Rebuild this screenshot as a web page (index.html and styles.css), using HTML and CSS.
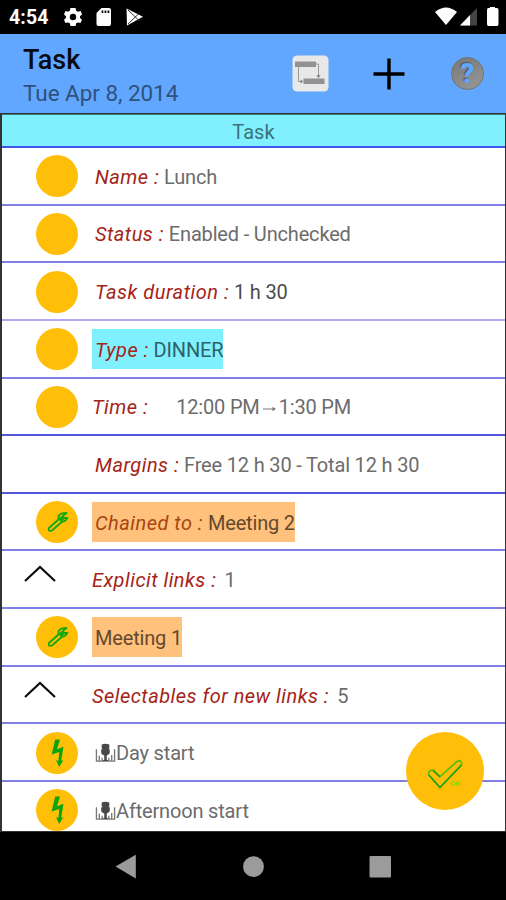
FILE: index.html
```html
<!DOCTYPE html>
<html lang="en">
<head>
<meta charset="utf-8">
<title>Task</title>
<link rel="stylesheet" href="styles.css">
</head>
<body>
<svg class="defs" aria-hidden="true">
  <symbol id="wrench" viewBox="0 0 42 42"><path d="M13 27 L22.5 18.5 Q21.5 14 26 12.3 L30.5 12 L27 14.8 L28 17 L31.5 16.8 Q29.5 20.5 26 20.8 L16 29.5 Q11.5 31 13 27Z" fill="none" stroke="#12a80c" stroke-width="1.8" stroke-linejoin="round"/><path d="M22.5 18 L26 14.5 L28 18.5 L25 21Z" fill="#12a80c"/></symbol>
  <symbol id="bolt" viewBox="0 0 42 42"><path d="M19.2 7.5 L24 7.5 L21 17.3 L27.5 14.8 L25.2 28.7 L27.4 28 L23.2 35 L20 28 L22.4 29 L23.2 20 L15.6 22.6Z" fill="#0ca50c"/></symbol>
  <symbol id="chevron" viewBox="0 0 32 18"><path d="M1 16 L16 2 L31 16" fill="none" stroke="#080808" stroke-width="2.1"/></symbol>
  <symbol id="mic" viewBox="0 0 22 20"><path d="M1.5 6 V18.5 H20.5 V6 M4.5 13 V18 M7.5 15 V18 M14.5 15 V18 M17.5 12 V18" fill="none" stroke="#777" stroke-width="1.4"/><path d="M7 1 Q11 -.5 15 1 V5 L14 6 H15.5 V10 Q14.5 12 12.3 12.5 V17 L14.5 18.5 H7.5 L9.7 17 V12.5 Q7 12 6.5 10 V6 H8 L7 5Z" fill="#484848"/></symbol>
</svg>
<div class="screen">
  <header class="status">
    <span class="clock">4:54</span>
    <svg class="tray" width="84" height="20" viewBox="0 0 84 20">
      <g fill="#fff">
        <path fill-rule="evenodd" d="M7.5 1 H12.5 L13.2 3.8 L15 4.8 L17.8 4 L19 7.5 L17 9.2 V11 L19 12.8 L17.5 16 L14.8 15.4 L13.2 16.3 L12.5 19 H7.5 L6.8 16.3 L5 15.4 L2.4 16 L1 12.8 L3 11 V9.2 L1 7.5 L2.4 4 L5 4.8 L6.8 3.8Z M10 6.8 A3.2 3.2 0 1 0 10 13.2 A3.2 3.2 0 1 0 10 6.8Z"/>
        <path fill-rule="evenodd" d="M38.5 1 H46 Q48 1 48 3 V17 Q48 19 46 19 H35.5 Q33.5 19 33.5 17 V6Z M38.6 3.5 V6 H40.3 V3.5Z M41.6 3.5 V6 H43.3 V3.5Z M44.6 3.5 V6 H46.3 V3.5Z"/>
        <path d="M63.5 1.5 L80 9.7 L64 18.5Z"/>
      </g>
      <path d="M65 3 L76.5 14 M65 17 L76.5 6" stroke="#333" stroke-width="1" fill="none"/>
    </svg>
    <svg class="radio" width="66" height="20" viewBox="0 0 66 20">
      <path d="M0 5 Q11 -4 22 5 L11 18Z" fill="#fff"/>
      <path d="M25 18.5 L42 1 V18.5Z" fill="#444"/><path d="M25 18.5 L35 8 V18.5Z" fill="#fff"/>
      <path d="M55 1 V0 H60 V1 H62 Q63.5 1 63.5 3 V17 Q63.5 19 62 19 H53.5 Q52 19 52 17 V3 Q52 1 53.5 1Z" fill="#fff"/>
    </svg>
  </header>
  <div class="appbar">
    <div class="titles"><h1>Task</h1><p>Tue Apr 8, 2014</p></div>
    <svg class="link-tool" width="37" height="37" viewBox="0 0 37 37">
      <rect x=".5" y=".5" width="36" height="36" rx="4.5" fill="#e8e8e8"/>
      <path d="M3 6.5 H24 V12 H3Z M11.5 23.5 H32.5 V29 H11.5Z" fill="#929292"/>
      <path d="M24 9 H26.5 V21 M6.5 12 V26.5 H9" fill="none" stroke="#999" stroke-width="1"/>
      <path d="M24.5 20 H28.5 L26.5 23.5Z M8.5 24.5 L11.5 26.5 L8.5 28.5Z" fill="#888"/>
    </svg>
    <svg class="add-tool" width="32" height="32" viewBox="0 0 32 32"><path d="M16 .5 V31.5 M.5 16 H31.5" stroke="#000" stroke-width="3.4"/></svg>
    <span class="help">?</span>
  </div>
  <main class="list">
    <div class="caption">Task</div>
    <div class="row"><i class="dot"></i><p class="cell name"><em>Name :</em> Lunch</p></div>
    <div class="row"><i class="dot"></i><p class="cell stat"><em>Status :</em> Enabled - Unchecked</p></div>
    <div class="row soft"><i class="dot"></i><p class="cell dark"><em>Task duration :</em> 1 h 30</p></div>
    <div class="row"><i class="dot"></i><p class="cell type"><em>Type :</em> DINNER</p></div>
    <div class="row strong"><i class="dot"></i><p class="cell flush time"><em>Time :</em><span>12:00 PM<svg width="19" height="8" viewBox="0 0 19 8"><path d="M3 4 H14" stroke="#777" fill="none"/><path d="M12.5 1.7 L16 4 L12.5 6.3Z" fill="#777"/></svg>1:30 PM</span></p></div>
    <div class="row strong"><i class="dot none"></i><p class="cell"><em>Margins :</em> Free 12 h 30 - Total 12 h 30</p></div>
    <div class="row"><i class="dot"><svg width="42" height="42"><use href="#wrench"/></svg></i><p class="cell chained"><em>Chained to :</em> Meeting 2</p></div>
    <div class="row group"><svg class="chev" width="32" height="18"><use href="#chevron"/></svg><p class="cell flush links"><em>Explicit links :</em><span>1</span></p></div>
    <div class="row"><i class="dot"><svg width="42" height="42"><use href="#wrench"/></svg></i><p class="cell chained meeting">Meeting 1</p></div>
    <div class="row group"><svg class="chev" width="32" height="18"><use href="#chevron"/></svg><p class="cell flush choices"><em>Selectables for new links :</em><span>5</span></p></div>
    <div class="row"><i class="dot"><svg width="42" height="42"><use href="#bolt"/></svg></i><p class="cell mic"><svg width="21" height="20"><use href="#mic"/></svg>Day start</p></div>
    <div class="row"><i class="dot"><svg width="42" height="42"><use href="#bolt"/></svg></i><p class="cell mic"><svg width="21" height="20"><use href="#mic"/></svg>Afternoon start</p></div>
  </main>
  <nav class="nav">
    <svg width="506" height="68" viewBox="0 0 506 68" fill="#9b9b9b">
      <path d="M115.5 34.5 L135.8 22.7 V46.5Z"/><circle cx="253.5" cy="34.7" r="10.4"/><rect x="369.5" y="24" width="21.5" height="21.5" rx="1"/>
    </svg>
  </nav>
  <div class="fab">
    <svg width="78" height="78" viewBox="0 0 78 78">
      <path d="M22.8 43 Q22 38 27 38 L34 44.7 L51 29.5 Q56 27 55.5 33 L34 55.5Z" fill="none" stroke="#62bd09" stroke-width="1.8" stroke-linejoin="round"/>
      <path d="M22.8 43 L34 55.5 L55.5 33 M27 38.5 L34 45" fill="none" stroke="#229a16" stroke-width="1.5"/>
    </svg>
    <span>OK</span>
  </div>
</div>
</body>
</html>
```
FILE: styles.css
```css
* { box-sizing: border-box; margin: 0; padding: 0; }
body { width: 506px; height: 900px; overflow: hidden; background: #000; font-family: Roboto, "Liberation Sans", sans-serif; }
.defs { display: none; }
.screen { position: relative; display: flex; flex-direction: column; width: 506px; height: 900px; }
.status { display: flex; align-items: center; height: 34px; padding: 0 11px 0 9px; color: #fff; background: #000; }
.clock { width: 54px; font-size: 19.5px; font-weight: 700; letter-spacing: .1px; }
.radio { margin-left: auto; margin-right: -6px; }
.appbar { display: flex; align-items: center; height: 79px; padding: 0 22px 0 23px; background: #62a7ff; }
.titles { width: 269px; padding-top: 7px; }
h1 { font-size: 27px; line-height: 34px; font-weight: 500; color: #080b12; margin-top: -1px; }
.titles p { font-size: 22.5px; line-height: 33px; letter-spacing: -.05px; color: #2f517c; }
.add-tool { margin-left: 44px; }
.help { display: flex; align-items: center; justify-content: center; width: 33px; height: 33px; margin-left: auto; border: 1px solid #73736f; border-radius: 50%; background: linear-gradient(150deg, #777, #999); color: #62a7ff; font-size: 27px; font-weight: 900; text-shadow: -1px -1px 1px #555; }
.list { height: 719px; overflow: hidden; background: #fff; border: solid #333; border-width: 1px 1px 1px 2px; }
.caption { height: 34px; line-height: 34px; text-align: center; font-size: 20px; letter-spacing: .1px; color: #3c7378; background: #80f0ff; border-top: 1px solid #397b81; border-bottom: 2px solid #4057ef; }
.row { display: flex; align-items: center; height: 57.65px; padding-left: 34px; border-bottom: 2px solid #7f7fe6; }
.row.strong { border-color: #5555dc; }
.row.soft { border-color: #b4a8f7; }
.dot { display: block; flex: none; width: 42px; height: 42px; margin: 1px 14px 0 0; border-radius: 50%; background: #ffbf09; }
.dot.none { background: none; }
.dot svg { display: block; }
.cell { height: 40px; padding-left: 3px; line-height: 42px; font-size: 20px; letter-spacing: -.17px; color: #6c6c6c; white-space: nowrap; }
.cell em { color: #a52418; letter-spacing: .48px; }
.cell.dark { color: #4b4b4b; }
.cell.dark em { letter-spacing: .5px; }
.flush { display: flex; padding-left: 0; }
.type { padding-right: 0; color: #2d626b; background: #80f0ff; }
.time span { margin-left: 28px; }
.time svg { vertical-align: 1px; }
.chained { color: #64492d; background: #ffc17c; }
.chained em { color: #a74613; }
.group { padding-left: 22px; }
.chev { flex: none; margin: -10px 36px 0 0; }
.links span, .choices span { margin-left: 8px; }
.mic svg { vertical-align: -3px; }
.nav { height: 68px; background: #000; }
.nav svg { display: block; }
.fab { position: absolute; left: 406px; top: 732px; width: 78px; height: 78px; border-radius: 50%; background: #ffbf09; }
.fab svg { display: block; }
.fab span { position: absolute; left: 44px; top: 46px; font-size: 8px; line-height: 11px; font-weight: 700; color: #91d504; }
```
